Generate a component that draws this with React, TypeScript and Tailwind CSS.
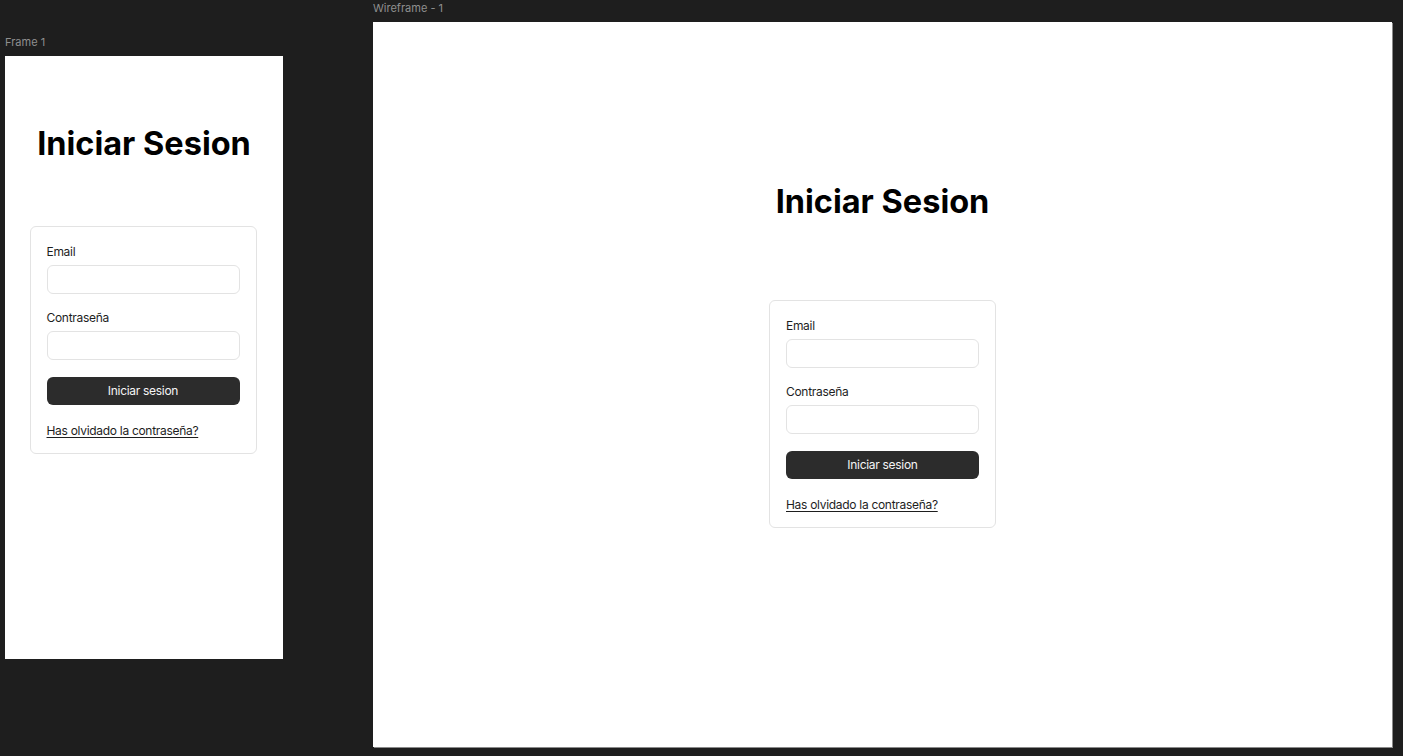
import type { ReactNode } from "react";

const font = { fontFamily: "Inter, 'Noto Sans', sans-serif" };

function Field({ label }: { label: string }) {
  return (
    <div className="flex flex-col">
      <label className="text-[12px] leading-[16px] tracking-[-0.3px] text-[#1e1e1e] mb-[5px]">{label}</label>
      <div className="h-[29px] w-full rounded-[6px] border border-[#e3e3e3] bg-white" />
    </div>
  );
}

function LoginCard() {
  return (
    <div className="w-[227px] rounded-[6px] border border-[#e3e3e3] bg-white pl-4 pr-[16px] pt-[17px] pb-[14px] flex flex-col">
      <Field label="Email" />
      <div className="h-4" />
      <Field label="Contraseña" />
      <button className="mt-[17px] h-[28px] w-full rounded-[6px] bg-[#2c2c2c] text-[12px] tracking-[-0.3px] text-[#f5f5f5]">
        Iniciar sesion
      </button>
      <a className="mt-[18px] self-start text-[12px] leading-[16px] tracking-[-0.3px] text-[#1e1e1e] underline underline-offset-2 decoration-[#1e1e1e]">
        Has olvidado la contraseña?
      </a>
    </div>
  );
}

function Frame({ name, className, labelClass, children }: {
  name: string; className: string; labelClass: string; children: ReactNode;
}) {
  return (
    <>
      <div className={"absolute text-[11px] leading-[14px] text-[#8f8f8f] " + labelClass}>{name}</div>
      <div className={"absolute bg-white flex flex-col items-center " + className}>{children}</div>
    </>
  );
}

export default function App() {
  return (
    <div className="relative w-[1403px] h-[756px] overflow-hidden bg-[#1e1e1e]" style={font}>
      <Frame name="Frame 1" labelClass="left-[5px] top-[35px]" className="left-[5px] top-[56px] w-[278px] h-[603px] pt-[68px]">
        <h1 className="text-[32.5px] leading-[40px] font-bold text-black">Iniciar Sesion</h1>
        <div className="mt-[62px] -translate-x-px">
          <LoginCard />
        </div>
      </Frame>
      <Frame name="Wireframe - 1" labelClass="left-[373px] top-[1px]" className="left-[373px] top-[22px] w-[1019px] h-[725px] pt-[160px] shadow-[1px_1px_0_0_#8a8a8a]">
        <h1 className="text-[32.5px] leading-[40px] font-bold text-black">Iniciar Sesion</h1>
        <div className="mt-[78px]">
          <LoginCard />
        </div>
      </Frame>
    </div>
  );
}
